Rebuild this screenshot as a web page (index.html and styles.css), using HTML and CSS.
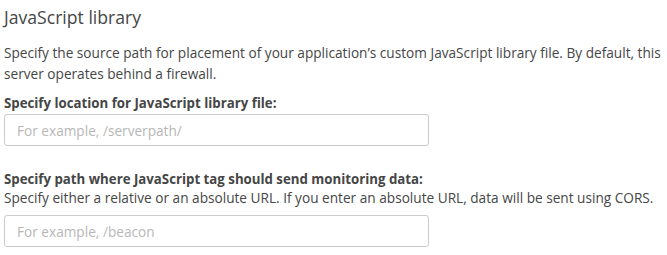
FILE: index.html
```html
<!DOCTYPE html>
<html>
<head>
  <title>JavaScript library</title>
  <link rel="stylesheet" href="styles.css">
</head>
<body>
  <div class="section">
    <h2>JavaScript library</h2>
    <p class="desc">Specify the source path for placement of your application’s custom JavaScript library file. By default, this server operates behind a firewall.</p>

    <div class="field">
      <label for="libPath">Specify location for JavaScript library file:</label>
      <input type="text" id="libPath" placeholder="For example, /serverpath/">
    </div>

    <div class="field">
      <label for="beaconPath">Specify path where JavaScript tag should send monitoring data:</label>
      <p class="hint">Specify either a relative or an absolute URL. If you enter an absolute URL, data will be sent using CORS.</p>
      <input type="text" id="beaconPath" placeholder="For example, /beacon">
    </div>
  </div>
</body>
</html>
```

FILE: styles.css
```css
:root {
  --text: #454646;
  --placeholder: #b7b7b7;
  --border: #cccccc;
}

* {
  margin: 0;
  padding: 0;
  box-sizing: border-box;
}

body {
  font-family: 'Open Sans', sans-serif;
  color: var(--text);
  background: #fff;
  padding: 5px 4px 0;
}

.section {
  width: 663px;
}

.section h2 {
  font-size: 17.6px;
  font-weight: 400;
  line-height: 24px;
  margin-bottom: 13px;
}

.desc {
  font-size: 13.65px;
  line-height: 21px;
  margin-bottom: 9px;
}

.field {
  display: flex;
  flex-direction: column;
}

.field + .field {
  margin-top: 23px;
}

.field label {
  font-size: 13.25px;
  font-weight: 700;
  line-height: 21px;
}

.hint {
  font-size: 13.65px;
  line-height: 21px;
  margin-top: -3px;
  margin-bottom: 7px;
}

.field input {
  width: 425px;
  height: 32px;
  border: 1px solid var(--border);
  border-radius: 3px;
  padding: 0 12px;
  font-family: inherit;
  font-size: 13.65px;
  color: var(--text);
  outline: none;
}

.field input::placeholder {
  color: var(--placeholder);
}
```
